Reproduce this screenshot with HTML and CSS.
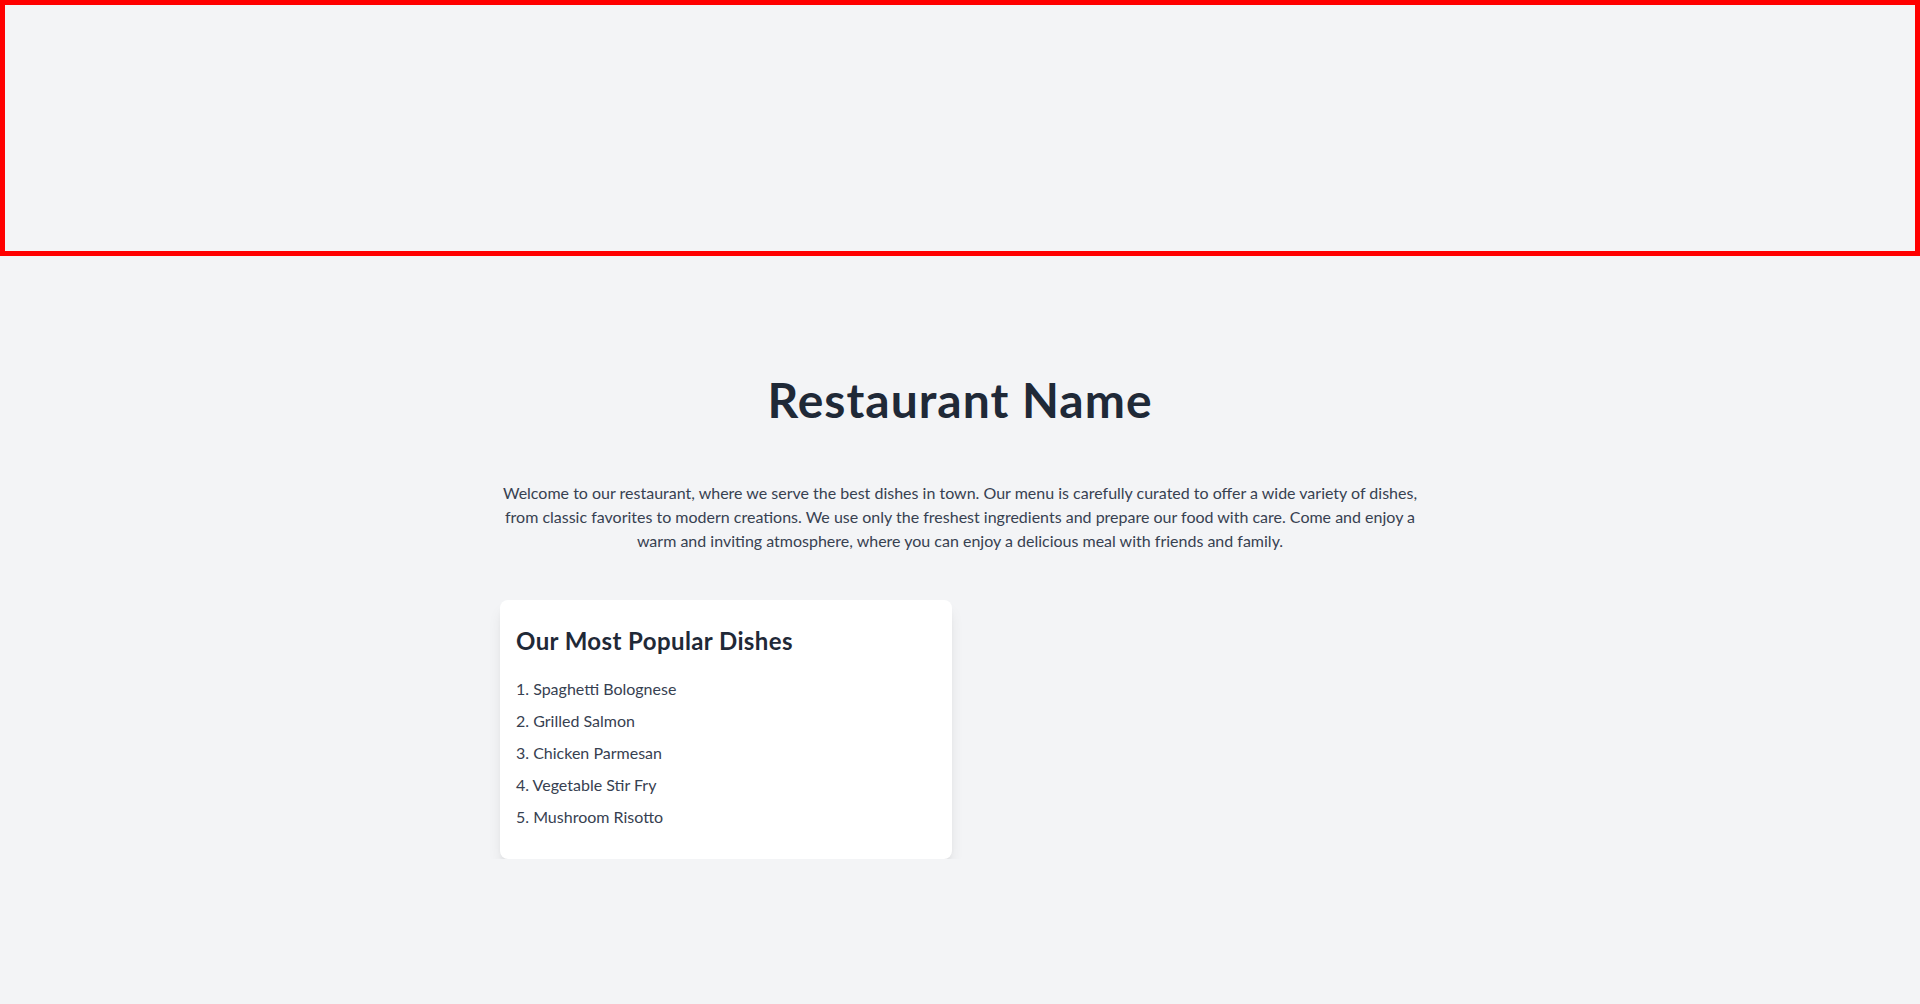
FILE: index.html
```
<!DOCTYPE html>
<html lang="en">
<head>
<meta charset="utf-8">
<title>Restaurant Name</title>
<link rel="stylesheet" href="styles.css">
</head>
<body>
  <div class="banner"></div>
  <main class="container">
    <h1 class="title">Restaurant Name</h1>
    <p class="intro">Welcome to our restaurant, where we serve the best dishes in town. Our menu is carefully curated to offer a wide variety of dishes, from classic favorites to modern creations. We use only the freshest ingredients and prepare our food with care. Come and enjoy a warm and inviting atmosphere, where you can enjoy a delicious meal with friends and family.</p>
    <div class="grid">
      <section class="card">
        <h2 class="card-title">Our Most Popular Dishes</h2>
        <ul class="dish-list">
          <li>1. Spaghetti Bolognese</li>
          <li>2. Grilled Salmon</li>
          <li>3. Chicken Parmesan</li>
          <li>4. Vegetable Stir Fry</li>
          <li>5. Mushroom Risotto</li>
        </ul>
      </section>
    </div>
  </main>
</body>
</html>
```
FILE: styles.css
```
* { box-sizing: border-box; }
html, body { margin: 0; padding: 0; }
body {
  background: #f3f4f6;
  font-family: Lato, "Noto Sans", Arial, sans-serif;
  color: #374151;
}
.banner {
  height: 256px;
  border: 5px solid #ff0000;
}
.container {
  width: 920px;
  margin: 0 auto;
  padding-top: 120px;
}
.title {
  margin: 0 0 57px;
  font-size: 48px;
  line-height: 48px;
  font-weight: 700;
  letter-spacing: 1px;
  color: #1f2937;
  text-align: center;
}
.intro {
  margin: 0 0 47px;
  font-size: 16px;
  line-height: 24px;
  text-align: center;
}
.grid {
  display: grid;
  grid-template-columns: 1fr 1fr;
  gap: 16px;
}
.card {
  background: #ffffff;
  border-radius: 8px;
  box-shadow: 0 10px 15px -3px rgba(0,0,0,0.1), 0 4px 6px -4px rgba(0,0,0,0.1);
  padding: 25px 16px 30px;
}
.card-title {
  margin: 0 0 20px;
  font-size: 24px;
  line-height: 32px;
  font-weight: 700;
  letter-spacing: 0.4px;
  color: #1f2937;
}
.dish-list {
  list-style: none;
  margin: 0;
  padding: 0;
  display: flex;
  flex-direction: column;
  gap: 8px;
  font-size: 16px;
  line-height: 24px;
}
```
